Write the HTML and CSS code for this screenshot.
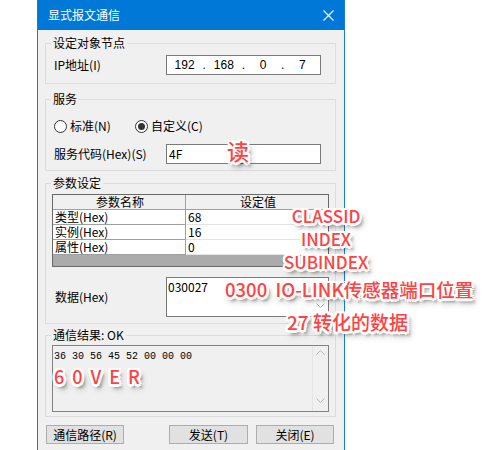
FILE: index.html
```html
<!DOCTYPE html>
<html lang="zh-CN">
<head>
  <meta charset="UTF-8">
  <title>显式报文通信</title>
  <link rel="stylesheet" href="styles.css">
</head>
<body>
  <div class="stage">
    <div class="dialog">
      <div class="titlebar">
        <span class="title">显式报文通信</span>
        <svg class="close" width="11" height="11" viewBox="0 0 11 11"><path d="M0.5 0.5L10.5 10.5M10.5 0.5L0.5 10.5" stroke="#fff" stroke-width="1.1"/></svg>
      </div>

      <div class="content">
        <div class="group g-node">
          <div class="legend">设定对象节点</div>
          <div class="row">
            <span class="lbl">IP地址(I)</span>
            <div class="field ip">
              <span class="oct">192</span><span class="dot">.</span>
              <span class="oct">168</span><span class="dot">.</span>
              <span class="oct">0</span><span class="dot">.</span>
              <span class="oct">7</span>
            </div>
          </div>
        </div>

        <div class="group g-service">
          <div class="legend">服务</div>
          <div class="radios">
            <div class="radio first"><span class="circle"></span>标准(N)</div>
            <div class="radio"><span class="circle on"></span>自定义(C)</div>
          </div>
          <div class="row">
            <span class="lbl">服务代码(Hex)(S)</span>
            <div class="field">4F</div>
          </div>
        </div>

        <div class="group g-param">
          <div class="legend">参数设定</div>
          <div class="ptable">
            <div class="prow head"><div>参数名称</div><div>设定值</div></div>
            <div class="prow"><div>类型(Hex)</div><div>68</div></div>
            <div class="prow"><div>实例(Hex)</div><div>16</div></div>
            <div class="prow"><div>属性(Hex)</div><div>0</div></div>
          </div>
          <div class="row data-row">
            <span class="lbl">数据(Hex)</span>
            <div class="memo data">
              <div class="memo-text">030027</div>
              <div class="vscroll">
                <svg width="9" height="5" viewBox="0 0 9 5"><path d="M0.5 4.5L4.5 0.5L8.5 4.5" fill="none" stroke="#b4b4b4"/></svg>
                <svg width="9" height="5" viewBox="0 0 9 5"><path d="M0.5 0.5L4.5 4.5L8.5 0.5" fill="none" stroke="#b4b4b4"/></svg>
              </div>
            </div>
          </div>
        </div>

        <div class="group g-result">
          <div class="legend">通信结果: OK</div>
          <div class="memo result">
            <div class="memo-text">36 30 56 45 52 00 00 00</div>
            <div class="vscroll">
              <svg width="9" height="5" viewBox="0 0 9 5"><path d="M0.5 4.5L4.5 0.5L8.5 4.5" fill="none" stroke="#b4b4b4"/></svg>
              <svg width="9" height="5" viewBox="0 0 9 5"><path d="M0.5 0.5L4.5 4.5L8.5 0.5" fill="none" stroke="#b4b4b4"/></svg>
            </div>
          </div>
        </div>

        <div class="buttons">
          <div class="btn">通信路径(R)</div>
          <div class="btn send">发送(T)</div>
          <div class="btn">关闭(E)</div>
        </div>
      </div>
    </div>

    <!-- annotations drawn over the screenshot -->
    <div class="note note-read">读</div>
    <div class="note note-ids">
      <div>CLASSID</div>
      <div>INDEX</div>
      <div>SUBINDEX</div>
    </div>
    <div class="note note-port">0300&nbsp;&nbsp;IO-LINK传感器端口位置</div>
    <div class="note note-conv">27 转化的数据</div>
    <div class="note note-over">60VER</div>
  </div>
</body>
</html>
```

FILE: styles.css
```css
* {
  box-sizing: border-box;
}

body {
  margin: 0;
  background: #fff;
  font-family: "Noto Sans CJK SC", sans-serif;
  font-size: 12px;
  color: #000;
}

.stage {
  position: relative;
  width: 495px;
  height: 450px;
  overflow: hidden;
}

.dialog {
  margin-left: 37px;
  width: 308px;
  height: 470px;
  border: 1px solid #1a7dd5;
  border-top: 0;
  background: #f0f0f0;
  line-height: 14px;
}

.titlebar {
  height: 30px;
  background: #0078d7;
  display: flex;
  align-items: center;
  justify-content: space-between;
  padding: 0 10px 0 10px;
}

.title {
  color: #fff;
  font-size: 12px;
}

.content {
  padding: 13px 8px 0 7px;
}

.group {
  border: 1px solid #dcdcdc;
  padding-bottom: 8px;
}

.legend {
  width: max-content;
  height: 14px;
  margin: -8px 0 0 5px;
  padding: 0 2px;
  background: #f0f0f0;
}

.row {
  display: flex;
  align-items: center;
  padding-left: 8px;
}

.lbl {
  width: 112px;
}

.field {
  width: 155px;
  height: 20px;
  border: 1px solid #7a7a7a;
  background: #fff;
  padding: 0 2px;
  line-height: 18px;
}

.ip {
  display: flex;
  font-family: "Liberation Sans", sans-serif;
  padding: 0;
}

.ip .oct {
  flex: 1;
  text-align: center;
}

.ip .dot {
  width: 4px;
  text-align: center;
}

.g-node .row {
  margin-top: 5px;
}

.g-service {
  margin-top: 15px;
  padding-bottom: 6px;
}

.radios {
  display: flex;
  margin-top: 12px;
  padding-left: 8px;
  height: 16px;
}

.radio {
  display: flex;
  align-items: center;
  gap: 3px;
}

.radio.first {
  width: 81px;
}

.circle {
  width: 13px;
  height: 13px;
  border: 1px solid #333;
  border-radius: 50%;
  background: #fff;
  display: flex;
  align-items: center;
  justify-content: center;
}

.circle.on::after {
  content: "";
  width: 7px;
  height: 7px;
  border-radius: 50%;
  background: #333;
}

.g-service .row {
  margin-top: 10px;
}

.g-param {
  margin-top: 12px;
  padding-bottom: 6px;
}

.ptable {
  width: 277px;
  height: 73px;
  margin: 4px 0 0 6px;
  border: 1px solid #696969;
  background: #ababab;
}

.prow {
  display: grid;
  grid-template-columns: 133px 1fr;
  height: 15px;
  background: #fff;
}

.prow div {
  border-bottom: 1px solid #e3e3e3;
  padding-left: 2px;
  line-height: 14px;
  white-space: nowrap;
}

.prow div:first-child {
  border-right: 1px solid #a0a0a0;
  border-bottom-color: #a0a0a0;
}

.prow.head div {
  background: #f0f0f0;
  text-align: center;
  border-bottom-color: #a0a0a0;
}

.data-row {
  margin-top: 10px;
  padding-left: 9px;
}

.data-row .lbl {
  width: 111px;
}

.memo {
  display: flex;
  border: 1px solid #7a7a7a;
}

.memo-text {
  flex: 1;
  padding: 2px 1px;
}

.memo.data {
  width: 163px;
  height: 40px;
  background: #fff;
}

.vscroll {
  width: 16px;
  display: flex;
  flex-direction: column;
  justify-content: space-between;
  align-items: center;
  padding: 4px 0 8px;
}

.result .vscroll {
  border-left: 1px solid #e4e4e4;
}

.g-result {
  margin-top: 11px;
  padding-bottom: 4px;
}

.memo.result {
  width: 277px;
  height: 67px;
  margin: 3px 0 0 6px;
  background: #f0f0f0;
  border-color: #828282;
}

.memo.result .memo-text {
  padding-top: 4px;
  font-family: "Liberation Mono", monospace;
  font-size: 10px;
}

.buttons {
  display: flex;
  margin-top: 8px;
  padding: 0 2px 0 1px;
  gap: 8px;
}

.btn {
  width: 78px;
  height: 19px;
  border: 1px solid #adadad;
  background: #e1e1e1;
  text-align: center;
  line-height: 17px;
}

.btn.send {
  margin-left: auto;
  width: 79px;
}

.note {
  position: absolute;
  color: #ff4242;
  font-family: "Noto Sans CJK SC", sans-serif;
  font-weight: 500;
  line-height: 1;
  white-space: nowrap;
  text-shadow:
    -2px -2px 0 #fff, 2px -2px 0 #fff, -2px 2px 0 #fff, 2px 2px 0 #fff,
    0 -2.5px 0 #fff, 0 2.5px 0 #fff, -2.5px 0 0 #fff, 2.5px 0 0 #fff,
    3px 4px 3px rgba(0, 0, 0, 0.4), 3px 5px 6px rgba(0, 0, 0, 0.35);
}

.note-read {
  left: 227px;
  top: 139px;
  font-size: 22px;
}

.note-ids {
  left: 276px;
  top: 204px;
  width: 100px;
  text-align: center;
  font-size: 17px;
  line-height: 23px;
}

.note-port {
  left: 225px;
  top: 280px;
  font-size: 18.5px;
}

.note-conv {
  left: 287px;
  top: 312px;
  font-size: 19px;
}

.note-over {
  left: 54px;
  top: 367px;
  font-size: 18px;
  letter-spacing: 8px;
}
```
